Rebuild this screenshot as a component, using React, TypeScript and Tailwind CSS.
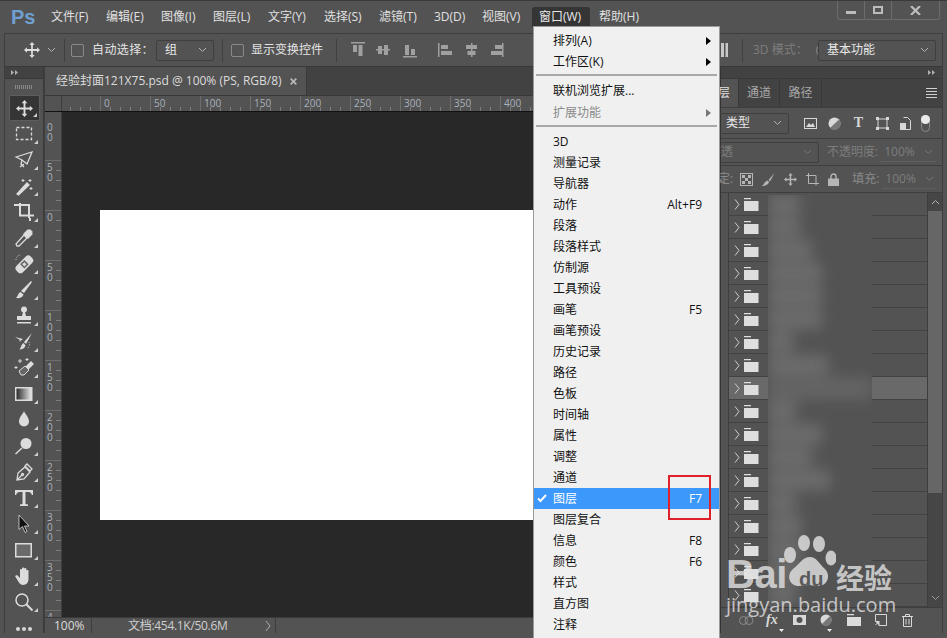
import React from "react";

const F = "font-['Open_Sans','Noto_Sans_CJK_SC',sans-serif]";
const C = "#dcdcdc";

const Chevron = ({ c = "#b5b5b5" }: { c?: string }) => (
  <svg width="9" height="6" viewBox="0 0 9 6" className="shrink-0"><path d="M1 1l3.5 3.5L8 1" fill="none" stroke={c} strokeWidth="1" /></svg>
);

const MoveIcon = ({ s = 18 }: { s?: number }) => (
  <svg width={s} height={s} viewBox="0 0 18 18" fill={C}>
    <path d="M9 0l3 3.4h-2V8h4.6V6L18 9l-3.4 3v-2H10v4.6h2L9 18l-3-3.4h2V10H3.400v2L0 9l3.400-3v2H8V3.400H6z" />
  </svg>
);

const menuBar = [
  { t: "文件(F)", w: "w-[55px]" },
  { t: "编辑(E)", w: "w-[55px]" },
  { t: "图像(I)", w: "w-[52px]" },
  { t: "图层(L)", w: "w-[55px]" },
  { t: "文字(Y)", w: "w-[56px]" },
  { t: "选择(S)", w: "w-[55px]" },
  { t: "滤镜(T)", w: "w-[55px]" },
  { t: "3D(D)", w: "w-[48px]" },
  { t: "视图(V)", w: "w-[50px]" },
];

const I = ({ children }: { children: React.ReactNode }) => (
  <svg width="20" height="20" viewBox="0 0 20 20" fill="none" stroke={C} strokeWidth="1.300">{children}</svg>
);

const tools: React.ReactNode[] = [
  <MoveIcon s={17} />,
  <I><rect x="2.500" y="3.500" width="15" height="12" strokeDasharray="3 2" /></I>,
  <I><path d="M2 7l16-5-5 12-5-4-6-3z" /><path d="M8 10l-1 4 3 3M6 17l4-3" /></I>,
  <I><path d="M3 18L13 7l2 2L4.500 19z" fill={C} /><path d="M9 3v3M7.500 4.500h3M16 3v3M14.500 4.500h3M17 11v3M15.500 12.500h3" strokeWidth="1" /></I>,
  <I><path d="M0 3h4M6 1v12.500h10M4 3h11v13" strokeWidth="2" /><path d="M16 16v3M16 13.500h4" strokeWidth="2" /></I>,
  <I><path d="M3 18l-1-2 8-9 3 3-8 8z" /><path d="M10 6l4-4 1 1 1-1 2 2-1 1 1 1-4 4z" fill={C} /></I>,
  <svg width="20" height="20" viewBox="0 0 20 20"><g transform="rotate(-45 10 10)"><rect x="0" y="6" width="20" height="9" rx="3.500" fill={C} /><rect x="7" y="7.500" width="6" height="6" fill="#666" /><rect x="8.500" y="9" width="3" height="3" fill={C} /></g><path d="M2 6a5 5 0 015-5" stroke={C} strokeDasharray="1 1.500" fill="none" /></svg>,
  <svg width="20" height="20" viewBox="0 0 20 20" fill={C}><path d="M17 1l1 1-8 11-3-2z" /><path d="M6.500 12l3 2.500C8.500 18 5 18.500 2 18c2-1.500 2-5 4.500-6z" /></svg>,
  <svg width="20" height="20" viewBox="0 0 20 20" fill={C}><circle cx="10" cy="3.500" r="3" /><path d="M9 6h2l1 4h5v4H3v-4h5z" /><rect x="3" y="16" width="14" height="1.500" /></svg>,
  <svg width="20" height="20" viewBox="0 0 20 20" fill={C}><path d="M18 1l-8 9 2 2z" /><path d="M9.500 11l2 2.500c-.500 2.500-3 4-6 4 1.500-1.500 1.500-5 4-6.500zM1 5l8 2-4 3 1-2z" /><path d="M15 10a6 6 0 01-2 7" stroke={C} strokeDasharray="1 1.500" fill="none" /></svg>,
  <svg width="20" height="20" viewBox="0 0 20 20"><path d="M11 9l6-6 3 3-6 6z" fill={C} /><path d="M5 13l6-5 4 4-5 5H7z" fill="#666" stroke={C} /><path d="M6 1v4M4 3h4M2 8v3M.500 9.500h3M13 0v3M11.500 1.500h3" stroke={C} /></svg>,
  <svg width="18" height="14" viewBox="0 0 18 14"><defs><linearGradient id="gr"><stop offset="0" stopColor="#222" /><stop offset="1" stopColor="#eee" /></linearGradient></defs><rect x=".750" y=".750" width="16" height="12.500" fill="url(#gr)" stroke={C} strokeWidth="1.500" /></svg>,
  <svg width="20" height="20" viewBox="0 0 20 20" fill={C}><path d="M10 1c1 3 5 6 5 10.500a5 5 0 01-10 0C5 7 9 4 10 1z" /></svg>,
  <svg width="20" height="20" viewBox="0 0 20 20" fill={C}><circle cx="12" cy="7.500" r="5.500" /><path d="M7.500 11.500l1 1L2 18.500l-1-1z" /></svg>,
  <I><path d="M3 18l1-7 7-6 5 5-6 7z" /><path d="M11 4l2-2 5 5-2 2zM3 18l5-5" /><circle cx="8.500" cy="12.500" r="1" /></I>,
  <svg width="20" height="20" viewBox="0 0 20 20" fill={C}><path d="M1 2h18v5h-1.200c-.3-2-1.300-3-4-3H11.500v12l2.500.6V18H6v-1.400l2.500-.6V4H6.200c-2.700 0-3.700 1-4 3H1z" /></svg>,
  <svg width="20" height="20" viewBox="0 0 20 20"><path d="M5 1v14.500l3.500-3 2.500 6 2-1-2.500-5.500H15z" fill="#111" stroke={C} strokeWidth=".8" /></svg>,
  <svg width="18" height="15" viewBox="0 0 18 15"><rect x=".750" y=".750" width="15.500" height="13" fill="#6a6a6a" stroke={C} strokeWidth="1.500" /></svg>,
  <svg width="20" height="20" viewBox="0 0 20 20" fill={C}><path d="M1 10l2-1 3 3V4c0-1.500 2-1.500 2 0V2.500c0-1.500 2.200-1.500 2.200 0V3c0-1.300 2.200-1.300 2.200 0v2c0-1.300 2.100-1.300 2.100 0v8c0 3-2 6-5.500 6C5.500 19 3.500 14 1 10z" /></svg>,
  <I><circle cx="8" cy="8" r="6" strokeWidth="1.500" /><path d="M12.500 12.500L18.500 18.500" strokeWidth="2" /></I>,
];

const alignIcons = (
  <svg width="168" height="16" viewBox="0 0 168 16" fill="#a0a0a0">
    <path d="M0 0h14v1.500H0zM2 3h4v7H2zM7.500 3h4v11h-4z" />
    <path d="M25 7h14v1.500H25zM27 4h4v8h-4zM33 3h4v10h-4z" />
    <path d="M52 14h14v1.500H52zM54 3h4v10h-4zM60 7h4v6h-4z" />
    <path d="M87 1h1.500v14H87zM90 3h7v4h-7zM90 9h11v4H90z" />
    <path d="M120 1h1.500v14H120zM115 3h11v4h-11zM116.500 9h8v4h-8z" />
    <path d="M151 1h1.500v14H151zM144 3h7v4h-7zM140 9h11v4h-11z" />
  </svg>
);

const Select = ({ text, cls, dim }: { text: string; cls: string; dim?: boolean }) => (
  <div className={`${cls} h-[21px] shrink-0 rounded-[2px] border border-[#3f3f3f] flex items-center justify-between pl-2 pr-[6px] whitespace-nowrap ${dim ? "text-[#7d7d7d]" : "text-[#e8e8e8]"}`}>
    <span>{text}</span>
    <Chevron c={dim ? "#777" : "#b5b5b5"} />
  </div>
);

const Sep = ({ cls }: { cls: string }) => <div className={`${cls} w-px h-[23px] bg-[#404040] shrink-0`} />;

const Check = ({ cls }: { cls: string }) => <div className={`${cls} w-[13px] h-[13px] rounded-[2px] border border-[#8a8a8a] shrink-0`} />;

const RulerH = ({ label }: { label: string }) => (
  <div className="relative w-[50px] h-full shrink-0 border-l border-[#6e6e6e] pl-[3px] text-[10px] leading-[14px] text-[#a9b2bc]">
    {label}
    <svg width="50" height="16" className="absolute left-0 top-0">
      {[9, 19, 29, 39].map((x) => <path key={x} d={`M${x}.500 11v5`} stroke="#7c7c7c" />)}
    </svg>
  </div>
);

const RulerV = ({ digits }: { digits: string[] }) => (
  <div className="relative h-[50px] w-full shrink-0 pl-[2px] text-[10px] leading-[10px] text-[#a9b2bc] border-t border-[#6e6e6e] pt-[1px]">
    {digits.map((d, i) => <div key={i} className="h-[10px]">{d}</div>)}
    <svg width="17" height="50" className="absolute left-0 top-0">
      {[9, 19, 29, 39].map((y) => <path key={y} d={`M11 ${y}.500h5`} stroke="#7c7c7c" />)}
    </svg>
  </div>
);

const layerRows = Array.from({ length: 18 }, (_, i) => i);

const blobs = [
  "w-[32px]", "w-[32px]", "w-[44px]", "w-[54px]", "w-[54px]", "w-[54px]", "w-[26px]", "w-[60px]", "w-[32px]",
  "w-[28px]", "w-[54px]", "w-[44px]", "w-[62px]", "w-[28px]", "w-[34px]", "w-[34px]", "w-[34px]", "w-[28px]",
];

const Folder = () => (
  <svg width="15" height="13" viewBox="0 0 15 13" fill="#dedede"><path d="M0 0h7v1.300H0zM0 3h14.500v10H0z" /></svg>
);

const windowItems: { t: string; s?: string; cur?: boolean }[] = [
  { t: "3D" }, { t: "测量记录" }, { t: "导航器" }, { t: "动作", s: "Alt+F9" }, { t: "段落" }, { t: "段落样式" },
  { t: "仿制源" }, { t: "工具预设" }, { t: "画笔", s: "F5" }, { t: "画笔预设" }, { t: "历史记录" }, { t: "路径" },
  { t: "色板" }, { t: "时间轴" }, { t: "属性" }, { t: "调整" }, { t: "通道" }, { t: "图层", s: "F7", cur: true },
  { t: "图层复合" }, { t: "信息", s: "F8" }, { t: "颜色", s: "F6" }, { t: "样式" }, { t: "直方图" }, { t: "注释" },
];

const Arrow = ({ c = "#000" }: { c?: string }) => (
  <svg width="5" height="8" viewBox="0 0 5 8" className="shrink-0"><path d="M0 0l5 4-5 4z" fill={c} /></svg>
);

const MenuRow = ({ t, arrow, dim }: { t: string; arrow?: boolean; dim?: boolean }) => (
  <div className={`h-[21px] flex items-center justify-between pl-[19px] pr-[8px] ${dim ? "text-[#8a8a8a]" : "text-[#111]"}`}>
    <span>{t}</span>
    {arrow && <Arrow c={dim ? "#777" : "#000"} />}
  </div>
);

const WindowMenu = () => (
  <div className="absolute left-[533px] top-[25px] w-[187px] h-[612px] z-20 bg-[#f0f0f0] border-l border-t border-r border-[#9a9a9a] pt-[3px] text-[12px]">
    <MenuRow t="排列(A)" arrow />
    <MenuRow t="工作区(K)" arrow />
    <div className="h-[2px] mx-[2px] mt-[2px] bg-[#a8a8a8]" />
    <div className="mt-[4px]"><MenuRow t="联机浏览扩展..." /></div>
    <div className="mt-px"><MenuRow t="扩展功能" arrow dim /></div>
    <div className="h-[2px] mx-[2px] mt-[2px] mb-[4px] bg-[#a8a8a8]" />
    {windowItems.map((m) => (
      <div key={m.t} className={`relative h-[21px] flex items-center justify-between pl-[19px] pr-[17px] ${m.cur ? "bg-[#3d98fb] text-white" : "text-[#111]"}`}>
        {m.cur && (
          <svg width="10" height="9" viewBox="0 0 10 9" className="absolute left-[3px] top-[6px]"><path d="M1 4.500l2.500 2.500L9 1" fill="none" stroke="#fff" strokeWidth="2" /></svg>
        )}
        <span>{m.t}</span>
        {m.s && <span>{m.s}</span>}
      </div>
    ))}
  </div>
);

const Watermark = () => (
  <div className="absolute left-[726px] top-[534px] w-[175px] h-[84px] z-10 text-[#e4e4e4]/80 pointer-events-none">
    <div className="absolute left-0 top-[16px] text-[40px] leading-[46px] font-bold font-['Liberation_Sans',sans-serif] tracking-[-0.5px]">Bai</div>
    <svg width="52" height="56" viewBox="0 0 52 56" className="absolute left-[58px] top-0" fill="#dcdcdc" fillOpacity=".85">
      <ellipse cx="6" cy="20" rx="6" ry="8" /><ellipse cx="20" cy="8" rx="6" ry="8" /><ellipse cx="35" cy="9" rx="6" ry="8" /><ellipse cx="47" cy="23" rx="5.500" ry="7.500" />
      <path d="M26 22c7 0 9 7 15 12 6 6 3 17-7 17-4 0-6-1-9-1-4 0-6 1-10 1C5 51 2 40 9 34c7-5 9-12 17-12z" />
    </svg>
    <div className="absolute left-[73px] top-[34px] text-[20px] leading-[20px] font-bold text-[#5a5a5a] font-['Liberation_Sans',sans-serif]">du</div>
    <div className="absolute left-[110px] top-[26px] text-[28px] leading-[32px] font-bold font-['Noto_Sans_CJK_SC',sans-serif]">经验</div>
    <div className="absolute left-0 top-[58px] text-[20px] leading-[24px] font-['Open_Sans',sans-serif]">jingyan.baidu.com</div>
  </div>
);

export default function App() {
  return (
    <div className={`relative w-[947px] h-[638px] overflow-hidden bg-[#535353] text-[12px] ${F} flex flex-col border-t border-[#3a3a3a]`}>
      {/* title / menu bar */}
      <div className="h-[32px] shrink-0 flex items-center relative">
        <div className="w-[51px] shrink-0 pl-[11px] text-[20px] leading-none font-bold text-[#6f9fd0] font-['Liberation_Sans',sans-serif]">Ps</div>
        {menuBar.map((m) => (
          <div key={m.t} className={`${m.w} shrink-0 text-[#e0e0e0]`}>{m.t}</div>
        ))}
        <div className="w-[58px] h-[20px] self-start mt-[6px] bg-[#353535] rounded-t-[3px] text-[#e8e8e8] pl-[7px] leading-[16px] pt-[2px] shrink-0">窗口(W)</div>
        <div className="ml-[9px] text-[#e0e0e0]">帮助(H)</div>
        <div className="ml-auto mr-[7px] -mt-[13px] w-[103px] h-[19px] border border-t-0 border-[#6c6c6c] rounded-b-[3px] flex">
          <div className="w-[27px] flex items-center justify-center border-r border-[#6c6c6c]"><div className="w-[10px] h-[3px] bg-[#bcbcbc] mt-[5px]" /></div>
          <div className="w-[27px] flex items-center justify-center border-r border-[#6c6c6c]"><div className="w-[10px] h-[8px] border-2 border-[#bcbcbc]" /></div>
          <div className="flex-1 flex items-center justify-center">
            <svg width="11" height="9" viewBox="0 0 11 9"><path d="M1 0l9 9M10 0L1 9" stroke="#bcbcbc" strokeWidth="2.200" /></svg>
          </div>
        </div>
      </div>

      {/* workspace */}
      <div className="h-[600px] mx-[4px] flex flex-col border-l border-r border-[#3e3e3e] border-t">
        {/* options bar */}
        <div className="h-[33px] shrink-0 flex items-center border-b border-[#383838] relative text-[#e4e4e4]">
          <div className="ml-[19px]"><MoveIcon s={16} /></div>
          <div className="ml-[7px]"><Chevron /></div>
          <Sep cls="ml-[8px]" />
          <Check cls="ml-[6px]" />
          <span className="ml-[8px] w-[64px] tracking-[0.4px] whitespace-nowrap">自动选择：</span>
          <Select text="组" cls="w-[58px]" />
          <Sep cls="ml-[8px]" />
          <Check cls="ml-[8px]" />
          <span className="ml-[7px] w-[72px] whitespace-nowrap">显示变换控件</span>
          <Sep cls="ml-[13px]" />
          <div className="ml-[14px]">{alignIcons}</div>
          <div className="flex-1" />
          <svg width="7" height="14" viewBox="0 0 7 14" className="mr-[14px]" fill="#c8c8c8"><path d="M0 0h3v14H0zM4.500 0H7v14H4.500z" /></svg>
          <Sep cls="mr-[10px]" />
          <span className="text-[#7d7d7d] w-[62px] whitespace-nowrap">3D 模式：</span>
          <svg width="3" height="9" viewBox="0 0 3 9" className="shrink-0"><path d="M2.500.5Q.5 4.500 2.500 8.500" fill="none" stroke="#8a8a8a" /></svg>
          <Select text="基本功能" cls="w-[118px] mr-[6px]" />
        </div>

        {/* main */}
        <div className="flex-1 min-h-0 flex">
          {/* tool column */}
          <div className="w-[39px] shrink-0 border-r border-[#3a3a3a] flex flex-col">
            <div className="h-[12px] shrink-0 bg-[#424242] flex items-center pl-[6px] border-b border-[#383838]">
              <svg width="8" height="5" viewBox="0 0 8 5" fill="#b0b0b0"><path d="M0 0l3 2.500L0 5zM4 0l3 2.500L4 5z" /></svg>
            </div>
            <div className="h-[16px] shrink-0 flex items-center justify-center">
              <div className="w-[18px] h-[4px] bg-[repeating-linear-gradient(90deg,#8a8a8a_0,#8a8a8a_1px,transparent_1px,transparent_2px)]" />
            </div>
            <div className="flex-1 flex flex-col items-center">
              {tools.map((t, i) => (
                <div key={i} className={`relative w-[31px] h-[26px] shrink-0 flex items-center justify-center ${i === 0 ? "bg-[#353535] border border-[#5e5e5e] rounded-[2px]" : ""}`}>
                  {t}
                  <svg width="4" height="4" viewBox="0 0 4 4" className="absolute right-[2px] bottom-[3px]"><path d="M4 0v4H0z" fill="#cfcfcf" /></svg>
                </div>
              ))}
              <div className="h-[18px] pt-[9px] flex items-center gap-[2px]">
                <div className="w-[4px] h-[4px] rounded-full bg-[#d8d8d8]" />
                <div className="w-[4px] h-[4px] rounded-full bg-[#d8d8d8]" />
                <div className="w-[4px] h-[4px] rounded-full bg-[#d8d8d8]" />
              </div>
            </div>
          </div>
          <div className="w-[1px] shrink-0 bg-[#3f3f3f]" />

          {/* document */}
          <div className="w-[675px] shrink-0 flex flex-col">
            <div className="h-[29px] shrink-0 bg-[#424242] flex border-b border-[#383838]">
              <div className="w-[262px] bg-[#535353] flex items-center pl-[11px] text-[#dcdcdc] border-r border-[#3a3a3a]">
                <span>经验封面121X75.psd @ 100% (PS, RGB/8)</span>
                <svg width="7" height="7" viewBox="0 0 7 7" className="ml-[8px]"><path d="M.7.7l5.600 5.600M6.300.7L.7 6.300" stroke="#b5b5b5" strokeWidth="1.800" /></svg>
              </div>
            </div>
            <div className="h-[16px] shrink-0 flex border-b border-[#111] overflow-hidden">
              <div className="w-[17px] shrink-0 border-r border-[#3e3e3e]" />
              <div className="w-[38px] shrink-0 relative">
                <svg width="38" height="16"><path d="M8.500 11v5M18.500 11v5M28.500 11v5" stroke="#7c7c7c" /></svg>
              </div>
              {["0", "50", "100", "150", "200", "250", "300", "350", "400"].map((l) => <RulerH key={l} label={l} />)}
            </div>
            <div className="flex-1 min-h-0 flex">
              <div className="w-[17px] shrink-0 border-r border-[#3e3e3e] overflow-hidden flex flex-col">
                <div className="h-[48px] shrink-0 relative text-[10px] leading-[10px] text-[#a9b2bc] pl-[2px] pt-[10px]">
                  <div className="h-[10px]">0</div><div className="h-[10px]">0</div>
                </div>
                <RulerV digits={["5", "0"]} />
                <RulerV digits={["0"]} />
                <RulerV digits={["5", "0"]} />
                <RulerV digits={["1", "0", "0"]} />
                <RulerV digits={["1", "5", "0"]} />
                <RulerV digits={["2", "0", "0"]} />
                <RulerV digits={["2", "5", "0"]} />
                <RulerV digits={["3", "0", "0"]} />
                <RulerV digits={["3", "5", "0"]} />
                <RulerV digits={["4"]} />
              </div>
              <div className="flex-1 bg-[#282828] pl-[38px] pt-[98px]">
                <div className="h-[310px] bg-white" />
              </div>
            </div>
            <div className="h-[16px] shrink-0 flex items-center border-t border-[#3a3a3a] text-[#dcdcdc]">
              <div className="w-[47px] h-full flex items-center pl-[9px] border-r border-[#3e3e3e] leading-none">100%</div>
              <div className="w-[184px] h-full flex items-center pl-[36px] border-r border-[#3e3e3e] text-[#cfcfcf] relative leading-none">
                <span className="tracking-[-0.3px]">文档:454.1K/50.6M</span>
                <svg width="6" height="10" viewBox="0 0 6 10" className="absolute right-[4px] top-[3px]"><path d="M1 0l4 5-4 5" fill="none" stroke="#b0b0b0" /></svg>
              </div>
            </div>
          </div>

          {/* panels */}
          <div className="flex-1 min-w-0 flex flex-col border-l border-[#333] pb-px">
            <div className="h-[12px] shrink-0 bg-[#424242] flex items-center justify-end pr-[6px] border-b border-[#383838]">
              <svg width="8" height="5" viewBox="0 0 8 5" fill="#b0b0b0"><path d="M0 0l3 2.500L0 5zM4 0l3 2.500L4 5z" /></svg>
            </div>
            <div className="h-[28px] shrink-0 bg-[#424242] flex text-[#a8a8a8] relative">
              <div className="w-[18px] shrink-0 bg-[#535353] flex items-center justify-end pr-[8px] border-r border-[#383838] text-[#e0e0e0] whitespace-nowrap">图层</div>
              <div className="w-[41px] flex items-center justify-center border-r border-[#383838]">通道</div>
              <div className="w-[42px] flex items-center justify-center border-r border-[#383838]">路径</div>
              <div className="ml-auto mr-[5px] self-center flex flex-col gap-[2px]">
                <div className="w-[11px] h-px bg-[#d0d0d0]" /><div className="w-[11px] h-px bg-[#d0d0d0]" /><div className="w-[11px] h-px bg-[#d0d0d0]" /><div className="w-[11px] h-px bg-[#d0d0d0]" />
              </div>
            </div>
            {/* filter */}
            <div className="h-[32px] shrink-0 flex items-center border-t border-b border-[#3e3e3e]">
              <Select text="类型" cls="w-[72px] -ml-[4px]" />
              <div className="ml-[15px] flex items-center gap-[11px]">
                <svg width="13" height="11" viewBox="0 0 13 11"><rect x=".5" y=".5" width="12" height="10" fill="none" stroke="#d8d8d8" /><path d="M2 9l3-4 2 2 2-2 2 4z" fill="#d8d8d8" /></svg>
                <svg width="13" height="13" viewBox="0 0 13 13"><circle cx="6.500" cy="6.500" r="6" fill="#d8d8d8" /><path d="M11 2.500L2 11a6 6 0 009-8.500z" fill="#777" /></svg>
                <div className="w-[13px] text-center text-[14px] leading-none font-bold text-[#d8d8d8] font-['Liberation_Serif',serif]">T</div>
                <svg width="13" height="13" viewBox="0 0 13 13" fill="#d8d8d8"><path d="M2 2h9v9H2z" fill="none" stroke="#d8d8d8" /><path d="M0 0h3v3H0zM10 0h3v3h-3zM0 10h3v3H0zM10 10h3v3h-3z" /></svg>
                <svg width="11" height="13" viewBox="0 0 11 13"><path d="M3.500.5h4l3 3v9h-7" fill="none" stroke="#d8d8d8" /><rect y="6" width="6" height="7" fill="#d8d8d8" /></svg>
              </div>
              <div className="relative ml-[10px] w-[9px] h-[17px] rounded-full border border-[#8a8a8a]">
                <div className="absolute -left-px -top-px w-[9px] h-[9px] rounded-full bg-[#eaeaea]" />
              </div>
            </div>
            {/* blend */}
            <div className="h-[27px] shrink-0 flex items-center border-b border-[#3e3e3e] text-[#7d7d7d]">
              <Select text="穿透" cls="w-[119px] -ml-[21px]" dim />
              <span className="ml-[8px] whitespace-nowrap">不透明度:</span>
              <div className="ml-[3px] w-[55px] h-[20px] border-b border-[#5f5f5f] flex items-center justify-between pl-[3px] pr-[3px]"><span>100%</span><Chevron c="#777" /></div>
            </div>
            {/* lock */}
            <div className="h-[27px] shrink-0 flex items-center border-b border-[#3e3e3e] text-[#8a8a8a]">
              <span className="-ml-[15px] whitespace-nowrap">锁定:</span>
              <div className="ml-[7px] flex items-center gap-[9px]">
                <svg width="13" height="13" viewBox="0 0 13 13" fill="#b5b5b5"><rect x=".5" y=".5" width="12" height="12" fill="none" stroke="#b5b5b5" /><path d="M2 2h3v3H2zM8 2h3v3H8zM5 5h3v3H5zM2 8h3v3H2zM8 8h3v3H8z" /></svg>
                <svg width="13" height="13" viewBox="0 0 13 13" fill="#b5b5b5"><path d="M12.500 0l-6 7 1.500 1.500zM5.500 7.500L7 9c-.500 2-3 4-7 4 2-1.500 2.500-4.500 5.500-5.500z" /></svg>
                <svg width="13" height="13" viewBox="0 0 18 18" fill="#b5b5b5"><path d="M9 0l3 3.400h-2V8h4.600V6L18 9l-3.400 3v-2H10v4.600h2L9 18l-3-3.400h2V10H3.400v2L0 9l3.400-3v2H8V3.400H6z" /></svg>
                <svg width="13" height="13" viewBox="0 0 13 13"><path d="M0 2.500h10v10M2.500 0v10.500H13" fill="none" stroke="#b5b5b5" /></svg>
                <svg width="11" height="13" viewBox="0 0 11 13"><path d="M3 6V3.500a2.500 2.500 0 015 0V6" fill="none" stroke="#b5b5b5" strokeWidth="1.400" /><rect y="5.500" width="11" height="7.500" fill="#b5b5b5" /></svg>
              </div>
              <span className="ml-[13px] whitespace-nowrap">填充:</span>
              <div className="ml-[3px] w-[55px] h-[20px] border-b border-[#5f5f5f] flex items-center justify-between pl-[3px] pr-[3px] text-[#7d7d7d]"><span>100%</span><Chevron c="#777" /></div>
            </div>
            {/* layers */}
            <div className="flex-1 min-h-0 flex relative">
              <div className="w-[8px] shrink-0 border-r border-[#3e3e3e]" />
              <div className="flex-1 flex flex-col overflow-hidden">
                {layerRows.map((i) => (
                  <div key={i} className={`h-[23px] shrink-0 flex items-center pl-[5px] border-b border-[#424242] ${i === 8 ? "bg-[#696969]" : ""}`}>
                    <svg width="6" height="11" viewBox="0 0 6 11"><path d="M1 .5L5 5.500 1 10.500" fill="none" stroke="#cfcfcf" /></svg>
                    <div className="ml-[4px]"><Folder /></div>
                  </div>
                ))}
              </div>
              <div className="absolute left-[47px] top-[2px] w-[104px] h-[412px] bg-[#535353] overflow-hidden">
                <div className="flex flex-col blur-[7px] -mt-[2px]">
                  {blobs.map((b, i) => (
                    <div key={i} className="h-[23px] relative shrink-0">
                      <div className={`${b} h-[20px] mt-[1px] bg-[#6c6c6c]`} />
                      {i === 8 && <div className="absolute inset-0 bg-[#646464]" />}
                    </div>
                  ))}
                </div>
              </div>
              <div className="w-[15px] shrink-0 flex flex-col items-center bg-[#464646] border-l border-[#3e3e3e]">
                <div className="h-[18px] flex items-center">
                  <svg width="9" height="6" viewBox="0 0 9 6"><path d="M1 5l3.500-3.500L8 5" fill="none" stroke="#b5b5b5" /></svg>
                </div>
                <div className="w-full h-[282px] bg-[#666]" />
                <div className="flex-1" />
                <div className="h-[18px] flex items-center"><Chevron c="#9a9a9a" /></div>
              </div>
            </div>
            {/* bottom */}
            <div className="h-[25px] shrink-0 flex items-center border-t border-[#3e3e3e] pl-[18px] gap-[12px]">
              <svg width="15" height="9" viewBox="0 0 15 9"><rect x=".5" y=".5" width="8" height="8" rx="4" fill="none" stroke="#8d8d8d" /><rect x="6" y=".5" width="8" height="8" rx="4" fill="none" stroke="#8d8d8d" /></svg>
              <span className="relative w-[15px] text-[14px] leading-none italic font-bold text-[#d8d8d8] font-['Liberation_Serif',serif]">
                fx
                <svg width="5" height="3" viewBox="0 0 5 3" className="absolute left-[13px] top-[16px]"><path d="M0 0h5L2.500 3z" fill="#eee" /></svg>
              </span>
              <svg width="13" height="10" viewBox="0 0 13 10"><rect width="13" height="10" fill="#d8d8d8" /><circle cx="6.500" cy="5" r="3" fill="#535353" /></svg>
              <span className="relative ml-[2px] flex">
                <svg width="12" height="12" viewBox="0 0 12 12"><circle cx="6" cy="6" r="5.500" fill="#d8d8d8" /><path d="M10 2L2 10a5.500 5.500 0 008-8z" fill="#777" /></svg>
                <svg width="5" height="3" viewBox="0 0 5 3" className="absolute left-[7px] top-[15px]"><path d="M0 0h5L2.500 3z" fill="#eee" /></svg>
              </span>
              <svg width="15" height="12" viewBox="0 0 15 12" fill="#dcdcdc" className="ml-[3px]"><path d="M0 0h7v1.300H0zM0 3h14v9H0z" /></svg>
              <svg width="12" height="12" viewBox="0 0 12 12" className="ml-[1px]"><path d="M.5.5h11v11H4v-4H.5zM4 7.500L.5 11" fill="none" stroke="#d8d8d8" /><path d="M.5 7.500H4v4z" fill="#d8d8d8" /></svg>
              <svg width="11" height="13" viewBox="0 0 11 13" fill="none" stroke="#d8d8d8" className="ml-[3px]"><path d="M0 2.500h11M3.500 2V.5h4V2M1.500 3v9.500h8V3M4 5v5.500M7 5v5.500" /></svg>
            </div>
          </div>
        </div>
      </div>

      <WindowMenu />
      <div className="absolute left-[668px] top-[474px] w-[43px] h-[45px] z-30 border-2 border-[#e0202a]" />
      <Watermark />
    </div>
  );
}
